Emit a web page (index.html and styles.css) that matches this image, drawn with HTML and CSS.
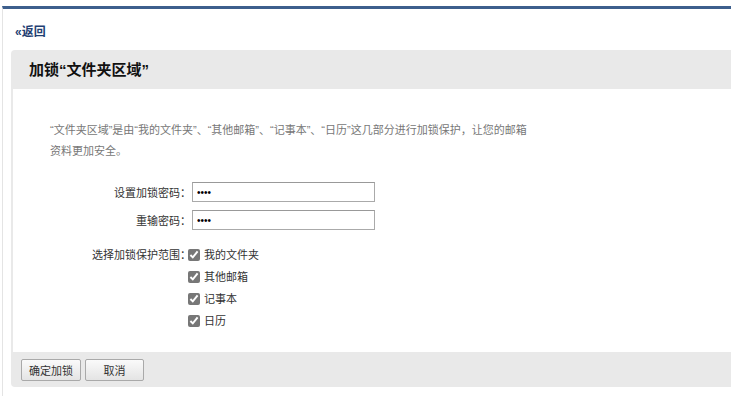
FILE: index.html
```html
<!DOCTYPE html>
<html lang="zh-CN">
<head>
    <meta charset="UTF-8">
    <title>加锁文件夹区域</title>
    <link rel="stylesheet" href="styles.css">
</head>
<body>
    <div class="page">
        <!-- 返回链接 -->
        <div class="back"><a href="#">«返回</a></div>

        <!-- 主面板 -->
        <div class="panel">
            <div class="panel-head">加锁“文件夹区域”</div>
            <div class="panel-body">
                <p class="desc">“文件夹区域”是由“我的文件夹”、“其他邮箱”、“记事本”、“日历”这几部分进行加锁保护，让您的邮箱<br>资料更加安全。</p>

                <div class="form">
                    <div class="row">
                        <label class="label">设置加锁密码：</label>
                        <input type="password" class="field" value="1234">
                    </div>
                    <div class="row">
                        <label class="label">重输密码：</label>
                        <input type="password" class="field" value="1234">
                    </div>
                    <div class="row row-scope">
                        <span class="label">选择加锁保护范围：</span>
                        <div class="checks">
                            <label class="check"><input type="checkbox" checked> 我的文件夹</label>
                            <label class="check"><input type="checkbox" checked> 其他邮箱</label>
                            <label class="check"><input type="checkbox" checked> 记事本</label>
                            <label class="check"><input type="checkbox" checked> 日历</label>
                        </div>
                    </div>
                </div>
            </div>
            <div class="panel-foot">
                <button class="btn">确定加锁</button>
                <button class="btn btn-wide">取消</button>
            </div>
        </div>
    </div>
</body>
</html>
```

FILE: styles.css
```css
body {
    margin: 0;
    padding: 0;
    background: #fff;
    font-family: "Liberation Sans", "Noto Sans CJK SC", sans-serif;
    font-size: 11px;
    color: #333;
}

.page {
    margin: 6px 2px 0 2px;
    border-top: 3px solid #3d5f8d;
    border-left: 1px solid #e4e4e4;
    height: 390px;
    box-sizing: border-box;
}

.back {
    padding: 15px 0 0 12px;
    height: 28px;
    box-sizing: border-box;
    line-height: 16px;
}

.back a {
    color: #1f3f73;
    text-decoration: none;
    font-weight: bold;
    font-size: 12px;
}

.panel {
    margin: 13px 0 0 8px;
    background: #e9e9e9;
    border-radius: 4px 0 0 4px;
    padding-left: 2px;
}

.panel-head {
    height: 39px;
    line-height: 39px;
    padding-left: 16px;
    font-size: 15px;
    font-weight: bold;
    color: #111;
}

.panel-body {
    background: #fff;
    height: 263px;
    box-sizing: border-box;
    padding: 31px 0 0 37px;
}

.desc {
    margin: 0;
    color: #777;
    line-height: 21px;
    white-space: nowrap;
}

.form {
    margin-top: 20px;
}

.row {
    display: flex;
    align-items: center;
    margin-bottom: 8px;
}

.label {
    width: 142px;
    text-align: right;
    color: #333;
    padding-right: 1px;
    box-sizing: border-box;
}

.field {
    width: 183px;
    height: 20px;
    box-sizing: border-box;
    border: 1px solid #aaa;
    border-top-color: #999;
    padding: 0 4px;
    font-size: 10px;
    margin: 0;
}

.row-scope {
    align-items: flex-start;
    margin-top: 17px;
}

.row-scope .label {
    line-height: 16px;
}

.checks {
    display: flex;
    flex-direction: column;
    gap: 6px;
    margin-left: -4px;
}

.check {
    display: flex;
    align-items: center;
    gap: 2px;
    line-height: 16px;
}

.check input {
    width: 12px;
    height: 12px;
    margin: 0 2px 0 0;
    accent-color: #777;
}

.panel-foot {
    height: 35px;
    display: flex;
    align-items: center;
    gap: 4px;
    padding-left: 8px;
    border-radius: 0 0 0 4px;
}

.btn {
    font-family: "Liberation Sans", "Noto Sans CJK SC", sans-serif;
    font-size: 11px;
    color: #333;
    height: 22px;
    width: 60px;
    padding: 0;
    background: linear-gradient(#fafafa, #e4e4e4);
    border: 1px solid #a9a9a9;
    border-radius: 2px;
}

.btn-wide {
    width: 59px;
}
```
